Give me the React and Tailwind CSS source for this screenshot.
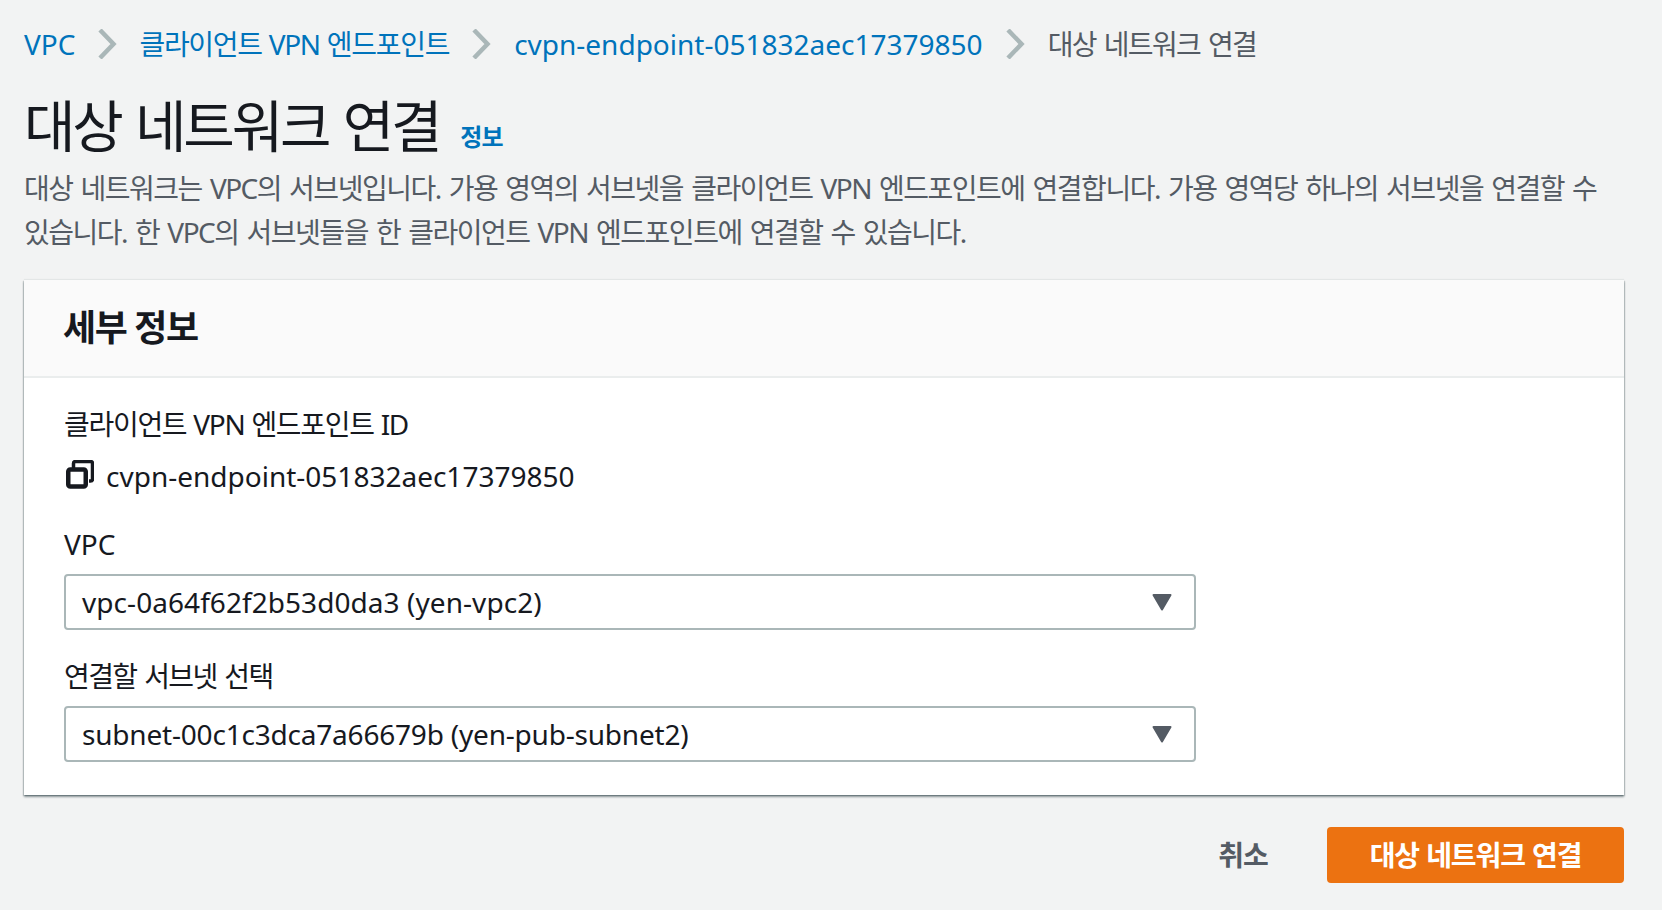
import React from "react";

function Chevron() {
  return (
    <svg width="19" height="30" viewBox="0 0 19 30" fill="none" className="shrink-0">
      <path d="M2 1 L15.5 15 L2 29" stroke="#aab7b8" strokeWidth="4.5" />
    </svg>
  );
}

function Caret() {
  return (
    <svg width="20" height="18" viewBox="0 0 20 18" className="shrink-0">
      <path d="M1.5 2 H18.5 L10 16.5 Z" fill="#545b64" stroke="#545b64" strokeWidth="2" strokeLinejoin="round" />
    </svg>
  );
}

function Select({ value, textClass }) {
  return (
    <div className="w-[1132px] h-[56px] border-2 border-[#aab7b8] rounded-[4px] bg-white flex items-center justify-between pl-[16px] pr-[22px]">
      <span className={textClass}>{value}</span>
      <Caret />
    </div>
  );
}

export default function App() {
  return (
    <div className="w-[1662px] h-[910px] overflow-hidden bg-[#f2f3f3] px-[24px] text-[#16191f] font-['Noto_Sans','Noto_Sans_CJK_KR',sans-serif]">
      <nav className="h-[88px] flex items-center text-[28px] leading-[40px] pb-[1px]">
        <span className="text-[#0073bb]">VPC</span>
        <span className="ml-[23px] mr-[22px]"><Chevron /></span>
        <span className="text-[#0073bb] tracking-[-1.3px] [word-spacing:1px]">클라이언트 VPN 엔드포인트</span>
        <span className="ml-[23px] mr-[23px]"><Chevron /></span>
        <span className="text-[#0073bb]">cvpn-endpoint-051832aec17379850</span>
        <span className="ml-[23px] mr-[23px]"><Chevron /></span>
        <span className="text-[#545b64] tracking-[-1.6px] [word-spacing:2px]">대상 네트워크 연결</span>
      </nav>
      <div className="flex items-end h-[72px] mt-[1px]">
        <h1 className="text-[56px] leading-[72px] font-normal text-[#16191f] tracking-[-3.2px] [word-spacing:3px]">대상 네트워크 연결</h1>
        <span className="ml-[21px] mb-[8px] text-[24px] leading-[32px] font-bold text-[#0073bb] tracking-[-0.04em]">정보</span>
      </div>
      <p className="mt-[5px] w-[1600px] text-[28px] leading-[44px] text-[#545b64] tracking-[-1.5px] [word-spacing:2.25px] [word-break:keep-all]">
        대상 네트워크는 VPC의 서브넷입니다. 가용 영역의 서브넷을 클라이언트 VPN 엔드포인트에 연결합니다. 가용 영역당 하나의 서브넷을 연결할 수 있습니다. 한 VPC의 서브넷들을 한 클라이언트 VPN 엔드포인트에 연결할 수 있습니다.
      </p>
      <section className="mt-[26px] w-[1600px] h-[515px] bg-white shadow-[0_2px_2px_rgba(0,28,36,0.4),1px_1px_1px_rgba(0,28,36,0.15),-1px_1px_1px_rgba(0,28,36,0.15),0_-1px_1px_rgba(0,28,36,0.06)]">
        <div className="h-[98px] bg-[#fafafa] border-b-2 border-[#eaeded] px-[40px] flex items-center">
          <h2 className="text-[36px] leading-[44px] font-bold text-[#16191f] tracking-[-0.04em] -ml-[1px]">세부 정보</h2>
        </div>
        <div className="px-[40px] pt-[26px]">
          <div className="text-[28px] leading-[40px] tracking-[-1.3px] [word-spacing:1px]">클라이언트 VPN 엔드포인트 ID</div>
          <div className="mt-[12px] flex items-center h-[40px]">
            <svg width="28" height="29" viewBox="0 0 28 29" fill="none" className="ml-[2px] mr-[12px] mb-[4px] shrink-0">
              <path d="M7.5 8 V3.5 a2 2 0 0 1 2-2 H24.5 a2 2 0 0 1 2 2 V19 a2 2 0 0 1-2 2 H23" stroke="#16191f" strokeWidth="3.5" />
              <rect x="2.25" y="9.5" width="17.5" height="17" rx="2" stroke="#16191f" strokeWidth="4.5" />
            </svg>
            <span className="text-[28px] leading-[40px]">cvpn-endpoint-051832aec17379850</span>
          </div>
          <div className="mt-[28px] text-[28px] leading-[40px]">VPC</div>
          <div className="mt-[10px]"><Select textClass="text-[28px] leading-[40px] text-[#16191f] tracking-[0.06px]" value="vpc-0a64f62f2b53d0da3 (yen-vpc2)" /></div>
          <div className="mt-[26px] text-[28px] leading-[40px] tracking-[-1.6px] [word-spacing:2px]">연결할 서브넷 선택</div>
          <div className="mt-[10px]"><Select textClass="text-[28px] leading-[40px] text-[#16191f] tracking-[-0.2px]" value="subnet-00c1c3dca7a66679b (yen-pub-subnet2)" /></div>
        </div>
      </section>
      <div className="mt-[32px] w-[1600px] flex items-center justify-end">
        <span className="text-[28px] leading-[40px] font-bold text-[#545b64] mr-[59px] tracking-[-0.03em]">취소</span>
        <button className="w-[297px] h-[56px] rounded-[4px] bg-[#ec7211] text-white text-[28px] leading-[40px] font-bold tracking-[-1.1px] [word-spacing:1px]">대상 네트워크 연결</button>
      </div>
    </div>
  );
}
